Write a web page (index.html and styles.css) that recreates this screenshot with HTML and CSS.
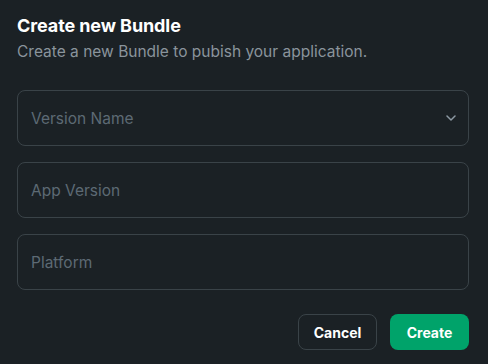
FILE: index.html
```html
<!DOCTYPE html>
<html>
<head>
<meta charset="utf-8">
<link rel="stylesheet" href="styles.css">
</head>
<body>
<div class="dialog">
  <h1 class="title">Create new Bundle</h1>
  <p class="subtitle">Create a new Bundle to pubish your application.</p>
  <div class="fields">
    <div class="field">
      <span class="placeholder">Version Name</span>
      <svg class="chevron" width="10" height="6" viewBox="0 0 10 6"><path d="M1 1l4 4 4-4" fill="none" stroke="#8d99a3" stroke-width="1.5" stroke-linecap="round" stroke-linejoin="round"/></svg>
    </div>
    <div class="field"><span class="placeholder">App Version</span></div>
    <div class="field"><span class="placeholder">Platform</span></div>
  </div>
  <div class="actions">
    <button class="btn btn-cancel">Cancel</button>
    <button class="btn btn-create">Create</button>
  </div>
</div>
</body>
</html>
```
FILE: styles.css
```css
html, body {
  margin: 0;
  padding: 0;
  background: #1b2125;
}
body {
  width: 488px;
  height: 364px;
  overflow: hidden;
  font-family: Inter, "Noto Sans", sans-serif;
}
.dialog {
  padding: 14px 19px 0 17px;
}
.title {
  margin: 0;
  font-size: 18px;
  font-weight: 700;
  color: #ffffff;
  line-height: 24px;
  letter-spacing: -0.1px;
}
.subtitle {
  margin: 4px 0 0;
  font-size: 15.5px;
  color: #8a949c;
  line-height: 20px;
}
.fields {
  margin-top: 28px;
  display: flex;
  flex-direction: column;
  gap: 16px;
}
.field {
  height: 54px;
  border: 1px solid #3a4348;
  border-radius: 8px;
  display: flex;
  align-items: center;
  justify-content: space-between;
  padding: 0 12px 0 13px;
}
.placeholder {
  font-size: 15.5px;
  color: #5d6a74;
}
.chevron {
  display: block;
}
.actions {
  margin-top: 24px;
  display: flex;
  justify-content: flex-end;
  gap: 13px;
}
.btn {
  height: 36px;
  width: 79px;
  border-radius: 8px;
  font-family: inherit;
  font-size: 14px;
  font-weight: 700;
  color: #ffffff;
  cursor: pointer;
}
.btn-cancel {
  background: transparent;
  border: 1px solid #3a4348;
}
.btn-create {
  background: #00a36a;
  border: none;
}
```
